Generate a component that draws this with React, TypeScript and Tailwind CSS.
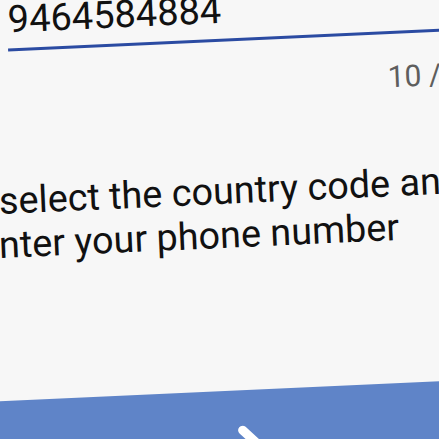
export default function App() {
  return (
    <div className="w-[439px] h-[439px] overflow-hidden bg-[#f7f7f7]">
      {/* the screen photo is tilted a little, so the whole panel is turned */}
      <div
        className="m-[-40px] w-[519px] h-[519px] rotate-[-2.6deg] flex flex-col bg-[#f7f7f7] text-[#111111]"
        style={{ fontFamily: "Roboto, 'Noto Sans', sans-serif" }}
      >
        <div className="pt-[28px] pl-[57px]">
          <div className="text-[38px] leading-[44px] whitespace-nowrap">9464584884</div>
        </div>
        <div className="mt-[7px] ml-[56px] h-[3px] bg-[#2b4ba2]" />

        <div className="mt-[25px] pl-[434px] text-[30px] leading-[36px] text-[#5e5e5e] whitespace-nowrap">
          10 / 10
        </div>

        <div className="mt-[66px] text-[37.8px] leading-[44px] whitespace-nowrap">
          <div className="pl-[40px]">select the country code and</div>
          <div className="pl-[18px]">enter your phone number</div>
        </div>

        <div className="mt-auto h-[88px] bg-[#5f84c8] flex">
          <svg
            className="ml-[268px] mt-[35px]"
            width="60"
            height="95"
            viewBox="0 0 60 95"
            fill="none"
          >
            <path
              d="M5 5 L45 45 L5 85"
              stroke="#ffffff"
              strokeWidth="9"
              strokeLinecap="round"
              strokeLinejoin="round"
            />
          </svg>
        </div>
      </div>
    </div>
  );
}
